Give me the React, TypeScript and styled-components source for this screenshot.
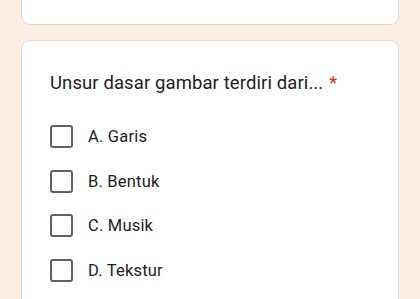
import React from "react";
import styled, { createGlobalStyle } from "styled-components";

const Global = createGlobalStyle`
  html, body { margin: 0; padding: 0; background: #fdeee4; }
  body { font-family: Roboto, "Noto Sans", Arial, sans-serif; }
`;

const Page = styled.div`
  width: 420px;
  height: 299px;
  overflow: hidden;
  box-sizing: border-box;
  padding: 0 21px;
  display: flex;
  flex-direction: column;
  gap: 15px;
  background: #fdeee4;
`;

const PrevCard = styled.div`
  flex: none;
  height: 24px;
  background: #fff;
  border: 1px solid #dadce0;
  border-top: none;
  border-radius: 0 0 9px 9px;
`;

const Card = styled.div`
  flex: none;
  background: #fff;
  border: 1px solid #dadce0;
  border-radius: 9px;
  padding: 30px 28px 20px;
  display: flex;
  flex-direction: column;
`;

const Title = styled.div`
  font-size: 18.5px;
  line-height: 24px;
  color: #202124;
  letter-spacing: 0.1px;
  margin-bottom: 19px;
`;

const Star = styled.span`
  color: #d93025;
  margin-left: 6px;
`;

const Options = styled.div`
  display: flex;
  flex-direction: column;
`;

const Row = styled.label`
  display: flex;
  align-items: center;
  height: 44.7px;
  gap: 15px;
  cursor: pointer;
`;

const Box = styled.span`
  width: 23px;
  height: 23px;
  box-sizing: border-box;
  border: 2.5px solid #5f6368;
  border-radius: 3px;
  flex: none;
`;

const Label = styled.span`
  font-size: 16.5px;
  color: #202124;
  letter-spacing: 0.2px;
`;

const options = ["A. Garis", "B. Bentuk", "C. Musik", "D. Tekstur"];

export default function App() {
  return (
    <>
      <Global />
      <Page>
        <PrevCard />
        <Card>
          <Title>
            Unsur dasar gambar terdiri dari...<Star>*</Star>
          </Title>
          <Options>
            {options.map((o) => (
              <Row key={o}>
                <Box />
                <Label>{o}</Label>
              </Row>
            ))}
          </Options>
        </Card>
      </Page>
    </>
  );
}
